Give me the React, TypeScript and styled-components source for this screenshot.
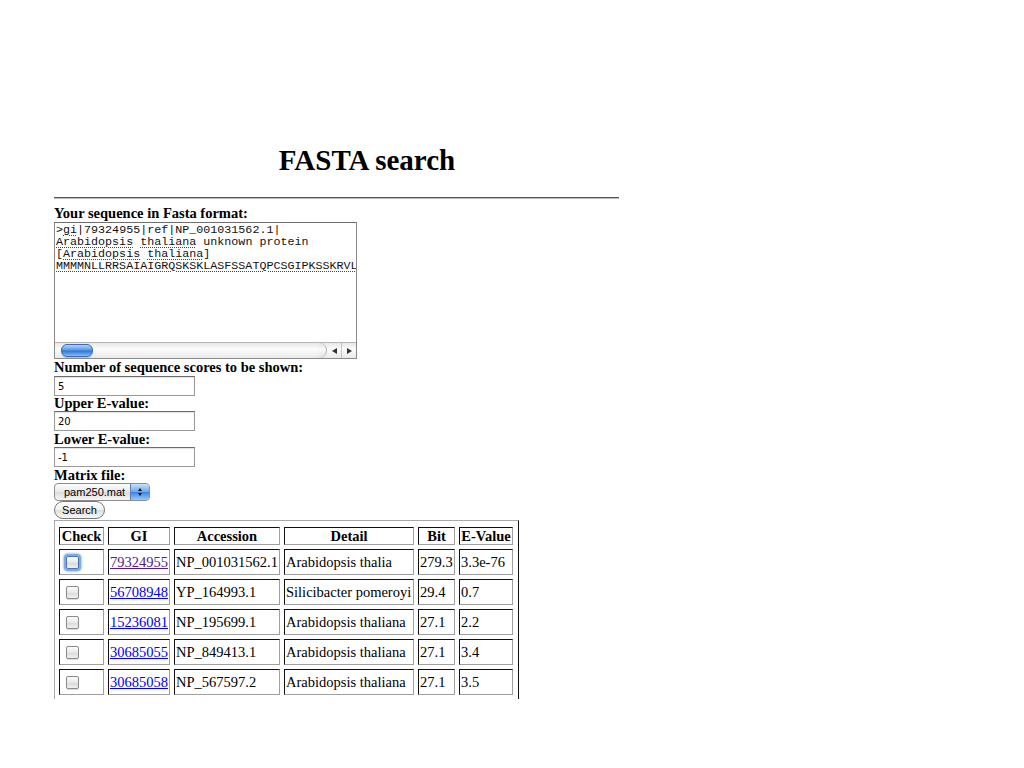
import React from "react";
import styled, { createGlobalStyle } from "styled-components";

const Global = createGlobalStyle`
  html, body { margin: 0; padding: 0; background: #fff; }
  body { font-family: "Liberation Serif", "Times New Roman", serif; font-size: 14.5px; color: #000; }
`;

const Page = styled.div`
  padding: 143px 0 0 54px;
  display: flex;
  flex-direction: column;
  align-items: flex-start;
`;

const Title = styled.h1`
  margin: 0;
  width: 626px;
  text-align: center;
  font-size: 29px;
  line-height: 34px;
  font-weight: bold;
`;

const Rule = styled.div`
  width: 565px;
  height: 1px;
  background: #555;
  border-bottom: 1px solid #bbb;
  margin: 20px 0 6px 0;
`;

const Label = styled.div<{ $h: number }>`
  font-weight: bold;
  font-size: 14.5px;
  line-height: ${(p) => p.$h}px;
  height: ${(p) => p.$h}px;
  white-space: nowrap;
`;

const SeqBox = styled.div`
  width: 301px;
  height: 135px;
  border: 1px solid #8a8a8a;
  border-top-color: #6f6f6f;
  display: flex;
  flex-direction: column;
  overflow: hidden;
`;

const SeqText = styled.pre`
  flex: 1;
  margin: 0;
  padding: 1px 0 0 1px;
  font-family: "Liberation Mono", "Courier New", monospace;
  font-size: 11.7px;
  line-height: 12px;
  color: #111;
  white-space: pre;
  overflow: hidden;
`;

const Sp = styled.span`
  text-decoration: underline dotted #e00;
  text-underline-offset: 2px;
  text-decoration-thickness: 1px;
`;

const HScroll = styled.div`
  height: 15px;
  display: flex;
  align-items: center;
  background: linear-gradient(#e6e6e6, #fcfcfc 40%, #e9e9e9);
  border-top: 1px solid #b5b5b5;
`;

const Thumb = styled.div`
  width: 30px;
  height: 11px;
  margin-left: 6px;
  border-radius: 6px;
  border: 1px solid #3d6ab3;
  background: linear-gradient(#b5d3f5, #5a9be6 45%, #2e77d6 55%, #86bdf5);
  box-shadow: 0 1px 1px rgba(0,0,0,0.2);
`;

const Track = styled.div`
  flex: 1;
`;

const ArrowCap = styled.div`
  width: 8px;
  height: 15px;
  border-radius: 0 8px 8px 0;
  border-right: 1px solid #b0b0b0;
  background: linear-gradient(#e0e0e0, #fafafa 40%, #e2e2e2);
`;

const ArrowBtn = styled.div<{ $dir: "l" | "r" }>`
  width: 14px;
  height: 15px;
  display: flex;
  align-items: center;
  justify-content: center;
  border-left: ${(p) => (p.$dir === "r" ? "1px solid #c4c4c4" : "none")};
  &::before {
    content: "";
    width: 0;
    height: 0;
    border-top: 3.5px solid transparent;
    border-bottom: 3.5px solid transparent;
    ${(p) => (p.$dir === "l" ? "border-right: 5px solid #333;" : "border-left: 5px solid #333;")}
  }
`;

const TextInput = styled.input`
  box-sizing: border-box;
  width: 141px;
  height: 20px;
  margin: 0;
  padding: 1px 3px 0;
  border: 1px solid #9a9a9a;
  border-top-color: #6a6a6a;
  font-family: "DejaVu Sans", "Liberation Sans", sans-serif;
  font-size: 10px;
  color: #000;
  outline: none;
  box-shadow: inset 0 1px 1px rgba(0,0,0,0.12);
`;

const Select = styled.div`
  box-sizing: border-box;
  width: 96px;
  height: 18px;
  border: 1px solid #8d8d8d;
  border-radius: 4px;
  display: flex;
  overflow: hidden;
  background: linear-gradient(#fdfdfd, #e9e9e9 50%, #dcdcdc 52%, #f6f6f6);
  font-family: "Liberation Sans", Arial, sans-serif;
  font-size: 11px;
`;

const SelectText = styled.div`
  flex: 1;
  padding-left: 9px;
  line-height: 16px;
  white-space: nowrap;
`;

const SelectArrows = styled.div`
  width: 18px;
  background: linear-gradient(#c9e0fb, #6aa6ee 50%, #3a86e4 52%, #9cc9f7);
  border-left: 1px solid #5b7fb4;
  display: flex;
  flex-direction: column;
  align-items: center;
  justify-content: center;
  gap: 2px;
`;

const Tri = styled.span<{ $up?: boolean }>`
  width: 0;
  height: 0;
  border-left: 2.5px solid transparent;
  border-right: 2.5px solid transparent;
  ${(p) => (p.$up ? "border-bottom: 3px solid #111;" : "border-top: 3px solid #111;")}
`;

const Button = styled.button`
  box-sizing: border-box;
  width: 51px;
  height: 18px;
  margin: 0;
  padding: 0 0 1px;
  border: 1px solid #777;
  border-radius: 9px;
  background: linear-gradient(#ffffff, #f0f0f0 50%, #dedede 52%, #f8f8f8);
  font-family: "Liberation Sans", Arial, sans-serif;
  font-size: 11px;
  color: #000;
`;

const Results = styled.table`
  margin-top: 1px;
  border-collapse: separate;
  border-spacing: 4px;
  border-top: 1px solid #a8a8a8;
  border-left: 1px solid #a8a8a8;
  border-right: 1px solid #111;
  border-bottom: none;
  padding: 2px 1px 0 0;
  font-size: 14.5px;
`;

const Th = styled.th<{ $w: number }>`
  width: ${(p) => p.$w}px;
  box-sizing: border-box;
  height: 18px;
  padding: 0 1px;
  border-top: 1px solid #111;
  border-left: 1px solid #111;
  border-right: 1px solid #a0a0a0;
  border-bottom: 1px solid #a0a0a0;
  font-weight: bold;
  text-align: center;
  line-height: 15px;
  white-space: nowrap;
`;

const Td = styled.td<{ $check?: boolean }>`
  box-sizing: border-box;
  height: 26px;
  padding: ${(p) => (p.$check ? "0 0 0 6px" : "0 1px")};
  border-top: 1px solid #111;
  border-left: 1px solid #111;
  border-right: 1px solid #a0a0a0;
  border-bottom: 1px solid #a0a0a0;
  text-align: left;
  vertical-align: middle;
  white-space: nowrap;
  overflow: hidden;
`;

const Check = styled.span<{ $focus?: boolean }>`
  display: inline-block;
  vertical-align: middle;
  width: 11px;
  height: 11px;
  margin-top: -2px;
  border: 1px solid ${(p) => (p.$focus ? "#4a74b5" : "#8a8a8a")};
  border-radius: 2px;
  background: linear-gradient(#fdfdfd, #e7e7e7 50%, #d8d8d8 52%, #f1f1f1);
  box-shadow: ${(p) =>
    p.$focus ? "0 0 0 2px #7fa9e3, 0 0 2px 3px rgba(90,140,220,0.45)" : "0 1px 1px rgba(0,0,0,0.15)"};
`;

const GiLink = styled.a<{ $visited?: boolean }>`
  color: ${(p) => (p.$visited ? "#551a8b" : "#0000ee")};
  text-decoration: underline;
`;

const rows = [
  { gi: "79324955", acc: "NP_001031562.1", detail: "Arabidopsis thalia", bit: "279.3", e: "3.3e-76", visited: true },
  { gi: "56708948", acc: "YP_164993.1", detail: "Silicibacter pomeroyi", bit: "29.4", e: "0.7" },
  { gi: "15236081", acc: "NP_195699.1", detail: "Arabidopsis thaliana", bit: "27.1", e: "2.2" },
  { gi: "30685055", acc: "NP_849413.1", detail: "Arabidopsis thaliana", bit: "27.1", e: "3.4" },
  { gi: "30685058", acc: "NP_567597.2", detail: "Arabidopsis thaliana", bit: "27.1", e: "3.5" },
];

export default function App() {
  return (
    <>
      <Global />
      <Page>
        <Title>FASTA search</Title>
        <Rule />
        <Label $h={17}>Your sequence in Fasta format:</Label>
        <SeqBox>
          <SeqText>
            {">"}<Sp>gi</Sp>{"|79324955|ref|NP_001031562.1|\n"}
            <Sp>Arabidopsis</Sp> <Sp>thaliana</Sp>{" unknown protein\n["}
            <Sp>Arabidopsis</Sp> <Sp>thaliana</Sp>{"]\n"}
            <Sp>MMMMNLLRRSAIAIGRQSKSKLASFSSATQPCSGIPKSSKRVLSSSKVGRRSA</Sp>
          </SeqText>
          <HScroll>
            <Thumb />
            <Track />
            <ArrowCap />
            <ArrowBtn $dir="l" />
            <ArrowBtn $dir="r" />
          </HScroll>
        </SeqBox>
        <Label $h={17}>Number of sequence scores to be shown:</Label>
        <TextInput readOnly value="5" />
        <Label $h={15}>Upper E-value:</Label>
        <TextInput readOnly value="20" />
        <Label $h={16}>Lower E-value:</Label>
        <TextInput readOnly value="-1" />
        <Label $h={16}>Matrix file:</Label>
        <Select>
          <SelectText>pam250.mat</SelectText>
          <SelectArrows>
            <Tri $up />
            <Tri />
          </SelectArrows>
        </Select>
        <Button>Search</Button>
        <Results>
          <thead>
            <tr>
              <Th $w={45}>Check</Th>
              <Th $w={62}>GI</Th>
              <Th $w={106}>Accession</Th>
              <Th $w={130}>Detail</Th>
              <Th $w={37}>Bit</Th>
              <Th $w={54}>E-Value</Th>
            </tr>
          </thead>
          <tbody>
            {rows.map((r, i) => (
              <tr key={r.gi}>
                <Td $check>
                  <Check $focus={i === 0} />
                </Td>
                <Td>
                  <GiLink href="#" $visited={r.visited}>{r.gi}</GiLink>
                </Td>
                <Td>{r.acc}</Td>
                <Td>{r.detail}</Td>
                <Td>{r.bit}</Td>
                <Td>{r.e}</Td>
              </tr>
            ))}
          </tbody>
        </Results>
      </Page>
    </>
  );
}
